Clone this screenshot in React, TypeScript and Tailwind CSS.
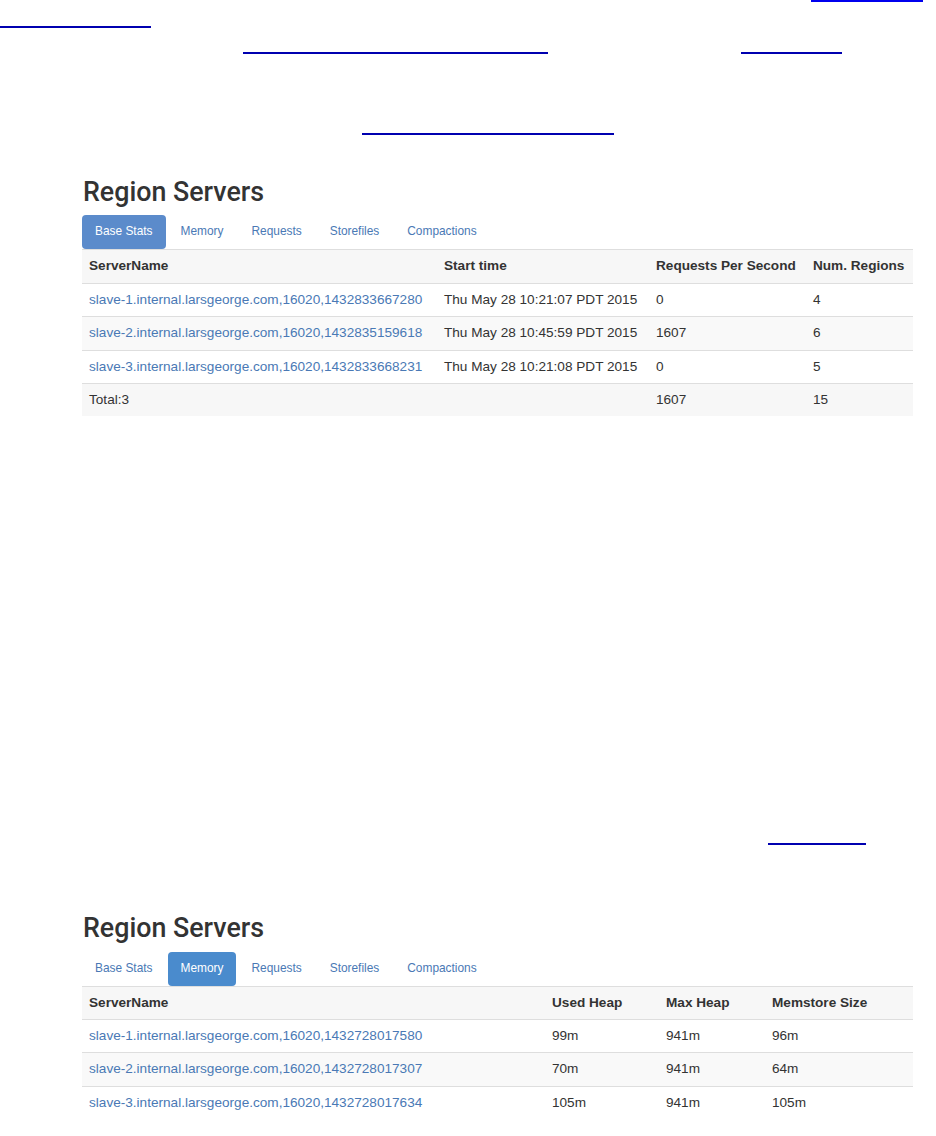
import React from 'react'

const tabs = ['Base Stats', 'Memory', 'Requests', 'Storefiles', 'Compactions']

function Tabs({ active, activeColor }: { active: string; activeColor: string }) {
  return (
    <div className="flex gap-[2px] text-[11.9px]">
      {tabs.map((t) => (
        <div
          key={t}
          className={
            t === active
              ? `h-[34px] px-[13px] flex items-center rounded-[4px] text-white ${activeColor}`
              : 'h-[34px] px-[13px] flex items-center text-[#4a79b5]'
          }
        >
          {t}
        </div>
      ))}
    </div>
  )
}

const baseRows = [
  ['slave-1.internal.larsgeorge.com,16020,1432833667280', 'Thu May 28 10:21:07 PDT 2015', '0', '4'],
  ['slave-2.internal.larsgeorge.com,16020,1432835159618', 'Thu May 28 10:45:59 PDT 2015', '1607', '6'],
  ['slave-3.internal.larsgeorge.com,16020,1432833668231', 'Thu May 28 10:21:08 PDT 2015', '0', '5'],
]

const memRows = [
  ['slave-1.internal.larsgeorge.com,16020,1432728017580', '99m', '941m', '96m'],
  ['slave-2.internal.larsgeorge.com,16020,1432728017307', '70m', '941m', '64m'],
  ['slave-3.internal.larsgeorge.com,16020,1432728017634', '105m', '941m', '105m'],
]

function Title() {
  return (
    <h2
      className="text-[26.8px] leading-[30px] font-medium text-[#333] pl-[1px]"
      style={{ fontFamily: 'Roboto, "Liberation Sans", sans-serif' }}
    >
      Region Servers
    </h2>
  )
}

export default function App() {
  const cell = 'px-[7px] flex items-center whitespace-nowrap'
  const baseGrid = 'grid grid-cols-[355px_212px_157px_107px] border-t border-[#dedede]'
  const memGrid = 'grid grid-cols-[463px_114px_106px_148px] border-t border-[#dedede]'
  const heights = ['h-[33px] bg-white', 'h-[34px] bg-[#f9f9f9]', 'h-[33px] bg-white']
  const memHeights = ['h-[33px] bg-white', 'h-[34px] bg-[#f9f9f9]', 'h-[34px] bg-white']

  return (
    <div
      className="w-[936px] h-[1136px] bg-white overflow-hidden text-[#333]"
      style={{ fontFamily: '"Liberation Sans", Arial, sans-serif' }}
    >
      {/* underlined links from the surrounding text */}
      <div className="ml-[811px] w-[112px] h-[2px] bg-[#0000ee]" />
      <div className="mt-[24px] w-[151px] h-[2px] bg-[#0000b0]" />
      <div className="mt-[24px] flex">
        <div className="ml-[243px] w-[305px] h-[2px] bg-[#0000b0]" />
        <div className="ml-[193px] w-[101px] h-[2px] bg-[#0000b0]" />
      </div>
      <div className="mt-[79px] ml-[362px] w-[252px] h-[2px] bg-[#0000b0]" />

      <div className="ml-[82px] w-[831px] mt-[42px]">
        <Title />
        <div className="mt-[8px]">
          <Tabs active="Base Stats" activeColor="bg-[#5b8bcb]" />
        </div>
        <div className="text-[13.6px]">
          <div className={`${baseGrid} h-[34px] bg-[#f7f7f7] font-bold`}>
            <div className={cell}>ServerName</div>
            <div className={cell}>Start time</div>
            <div className={cell}>Requests Per Second</div>
            <div className={cell}>Num. Regions</div>
          </div>
          {baseRows.map((r, i) => (
            <div key={r[0]} className={`${baseGrid} ${heights[i]}`}>
              <div className={`${cell} text-[#4a79b5]`}>{r[0]}</div>
              <div className={cell}>{r[1]}</div>
              <div className={cell}>{r[2]}</div>
              <div className={cell}>{r[3]}</div>
            </div>
          ))}
          <div className={`${baseGrid} h-[33px] bg-[#f7f7f7]`}>
            <div className={cell}>Total:3</div>
            <div className={cell}></div>
            <div className={cell}>1607</div>
            <div className={cell}>15</div>
          </div>
        </div>
      </div>

      <div className="mt-[427px] ml-[768px] w-[98px] h-[2px] bg-[#0000b0]" />

      <div className="ml-[82px] w-[831px] mt-[68px]">
        <Title />
        <div className="mt-[9px]">
          <Tabs active="Memory" activeColor="bg-[#4a8bcd]" />
        </div>
        <div className="text-[13.6px]">
          <div className={`${memGrid} h-[33px] bg-[#f7f7f7] font-bold`}>
            <div className={cell}>ServerName</div>
            <div className={cell}>Used Heap</div>
            <div className={cell}>Max Heap</div>
            <div className={cell}>Memstore Size</div>
          </div>
          {memRows.map((r, i) => (
            <div key={r[0]} className={`${memGrid} ${memHeights[i]}`}>
              <div className={`${cell} text-[#4a79b5]`}>{r[0]}</div>
              <div className={cell}>{r[1]}</div>
              <div className={cell}>{r[2]}</div>
              <div className={cell}>{r[3]}</div>
            </div>
          ))}
        </div>
      </div>
    </div>
  )
}
